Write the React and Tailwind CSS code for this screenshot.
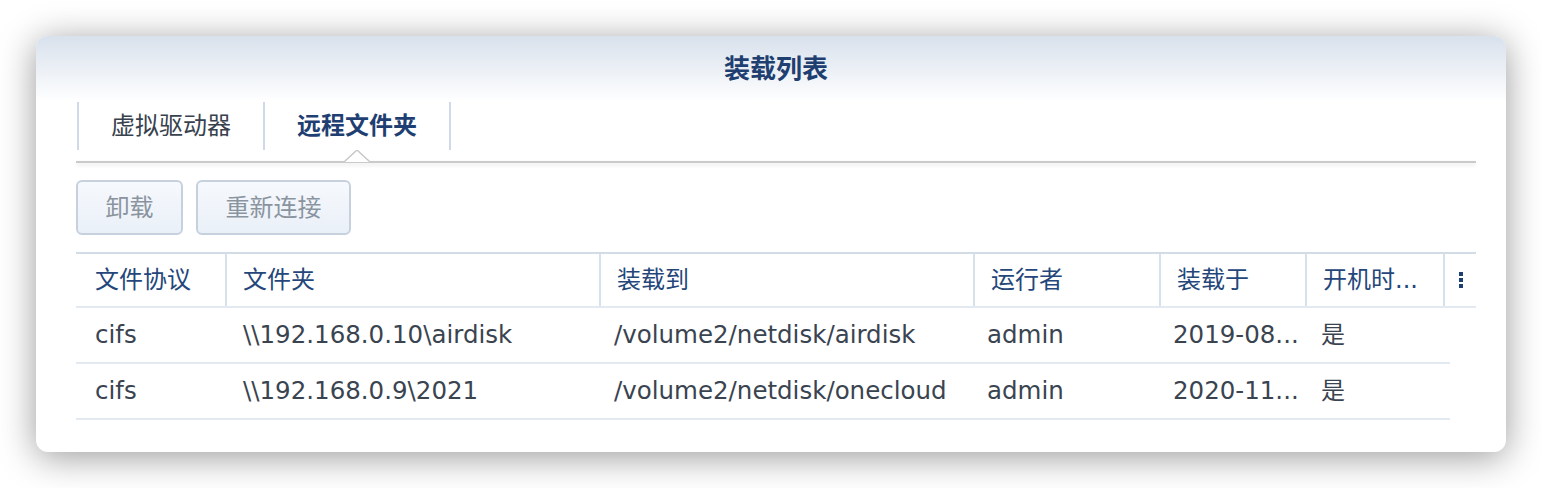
import React from 'react';

const columns = ['文件协议', '文件夹', '装载到', '运行者', '装载于', '开机时...'];

const mounts = [
  { protocol: 'cifs', folder: '\\\\192.168.0.10\\airdisk', target: '/volume2/netdisk/airdisk', runner: 'admin', mountedAt: '2019-08...', boot: '是' },
  { protocol: 'cifs', folder: '\\\\192.168.0.9\\2021', target: '/volume2/netdisk/onecloud', runner: 'admin', mountedAt: '2020-11...', boot: '是' },
];

const font = { fontFamily: '"DejaVu Sans", "Noto Sans CJK SC", sans-serif' };

export default function App() {
  return (
    <div className="w-full h-[488px] bg-white pt-[36px] pl-[36px]" style={font}>
      <div className="w-[1470px] h-[416px] rounded-[12px] bg-white shadow-[0_5px_36px_rgba(0,0,0,0.4)] overflow-hidden">
        {/* title bar */}
        <div className="h-[66px] bg-gradient-to-b from-[#d8e1ec] to-white pl-[40px] pr-[30px] flex items-center justify-center">
          <h1 className="text-[26px] font-bold text-[#1f3f70] leading-none">装载列表</h1>
        </div>

        <div className="pl-[40px] pr-[30px]">
          {/* tabs */}
          <div className="flex h-[48px] border-l-2 border-[#cfdae6] ml-[1px]">
            <div className="w-[186px] flex items-center justify-center border-r-2 border-[#cfdae6] text-[24px] text-[#38424e]">
              虚拟驱动器
            </div>
            <div className="w-[186px] flex items-center justify-center border-r-2 border-[#cfdae6] text-[24px] font-bold text-[#1f3f72]">
              远程文件夹
            </div>
          </div>
          <div className="relative h-[11px]">
            <svg className="absolute left-[268px] top-0" width="26" height="14" viewBox="0 0 26 14">
              <polygon points="0,12 13,0 26,12" fill="white" />
              <polyline points="0,12 13,0 26,12" fill="none" stroke="#c8c8c8" strokeWidth="1.5" />
            </svg>
          </div>
          <div className="h-[2px] bg-[#cacaca] shadow-[0_2px_4px_rgba(0,0,0,0.12)]" />

          {/* toolbar */}
          <div className="flex gap-[13px] mt-[17px]">
            <button className="w-[107px] h-[55px] rounded-[6px] border-2 border-[#c6d1dd] bg-gradient-to-b from-[#f6f9fd] to-[#eaf0f8] text-[24px] text-[#8a949f]">
              卸载
            </button>
            <button className="w-[155px] h-[55px] rounded-[6px] border-2 border-[#c6d1dd] bg-gradient-to-b from-[#f6f9fd] to-[#eaf0f8] text-[24px] text-[#8a949f]">
              重新连接
            </button>
          </div>

          {/* grid */}
          <div className="mt-[17px]">
            <div className="grid grid-cols-[149px_374px_374px_186px_146px_138px_33px] h-[56px] border-t-2 border-b-2 border-t-[#d2dce7] border-b-[#e3e9f0] text-[24px] text-[#24467a]">
              {columns.map((col, i) => (
                <div
                  key={col}
                  className={i === 0 ? 'flex items-center pl-[19px] whitespace-nowrap' : 'flex items-center pl-[16px] border-l-2 border-[#d6e1ec] whitespace-nowrap'}
                >
                  {col}
                </div>
              ))}
              <div className="flex items-center justify-center border-l-2 border-[#d6e1ec]">
                <div className="flex flex-col gap-[2px]">
                  <span className="w-[4px] h-[4px] bg-[#1f3f70]" />
                  <span className="w-[4px] h-[4px] bg-[#1f3f70]" />
                  <span className="w-[4px] h-[4px] bg-[#1f3f70]" />
                </div>
              </div>
            </div>

            {mounts.map((m, idx) => (
              <div
                key={idx}
                className="grid grid-cols-[149px_374px_374px_186px_146px_138px_7px] w-[1374px] h-[56px] border-b-2 border-[#e3e9f0] text-[24.5px] text-[#3a4450]"
              >
                <div className="flex items-center pl-[19px]">{m.protocol}</div>
                <div className="flex items-center pl-[18px] whitespace-nowrap">{m.folder}</div>
                <div className="flex items-center pl-[15px] whitespace-nowrap">{m.target}</div>
                <div className="flex items-center pl-[14px]">{m.runner}</div>
                <div className="flex items-center pl-[14px] whitespace-nowrap">{m.mountedAt}</div>
                <div className="flex items-center pl-[16px] text-[24px]">{m.boot}</div>
                <div />
              </div>
            ))}
          </div>
        </div>
      </div>
    </div>
  );
}
